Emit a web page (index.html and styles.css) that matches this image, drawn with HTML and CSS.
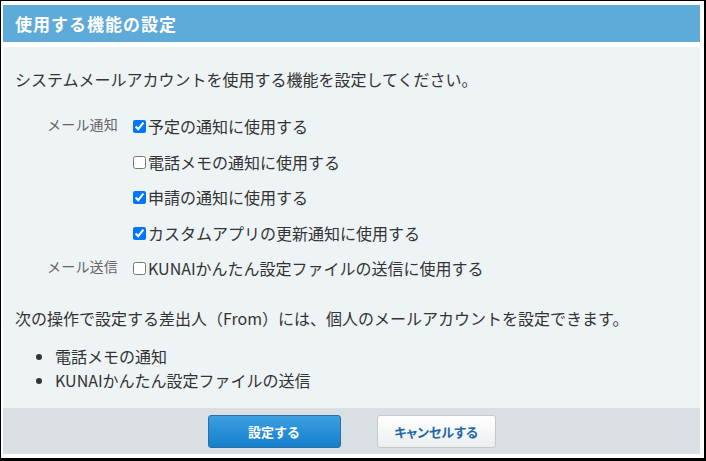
FILE: index.html
```html
<!DOCTYPE html>
<html lang="ja">
<head>
    <meta charset="UTF-8">
    <title>使用する機能の設定</title>
    <link rel="stylesheet" href="styles.css">
</head>
<body>
    <div class="dialog">
        <div class="dialog-title">使用する機能の設定</div>

        <div class="dialog-body">
            <p class="intro">システムメールアカウントを使用する機能を設定してください。</p>

            <div class="option-grid">
                <div class="option-label">メール通知</div>
                <label class="option"><input type="checkbox" checked>予定の通知に使用する</label>

                <div class="option-label"></div>
                <label class="option"><input type="checkbox">電話メモの通知に使用する</label>

                <div class="option-label"></div>
                <label class="option"><input type="checkbox" checked>申請の通知に使用する</label>

                <div class="option-label"></div>
                <label class="option"><input type="checkbox" checked>カスタムアプリの更新通知に使用する</label>

                <div class="option-label">メール送信</div>
                <label class="option"><input type="checkbox">KUNAIかんたん設定ファイルの送信に使用する</label>
            </div>

            <p class="note">次の操作で設定する差出人（From）には、個人のメールアカウントを設定できます。</p>
            <ul class="note-list">
                <li>電話メモの通知</li>
                <li>KUNAIかんたん設定ファイルの送信</li>
            </ul>
        </div>

        <div class="dialog-footer">
            <button type="button" class="btn btn-primary">設定する</button>
            <button type="button" class="btn btn-cancel">キャンセルする</button>
        </div>
    </div>
</body>
</html>
```

FILE: styles.css
```css
body {
    margin: 0;
    font-family: "Noto Sans CJK JP", "Noto Sans", sans-serif;
    color: #333;
    background-color: #ffffff;
}
.dialog {
    width: 706px;
    height: 461px;
    box-sizing: border-box;
    border-style: solid;
    border-color: #000;
    border-width: 1px 2px 3px 1px;
    padding: 4px 4px 4px 2px;
    background-color: #fff;
    display: flex;
    flex-direction: column;
}
.dialog-title {
    height: 37px;
    line-height: 37px;
    padding-left: 12px;
    background-color: #5eaad9;
    color: #fff;
    font-size: 17px;
    font-weight: bold;
    letter-spacing: 1px;
    margin-bottom: 5px;
}
.dialog-body {
    flex: 1;
    background-color: #eef3f6;
    padding: 20px 12px 0 12px;
    font-size: 16px;
}
.intro {
    margin: 0;
    line-height: 24px;
}

/* checkbox rows */
.option-grid {
    display: grid;
    grid-template-columns: 103px 1fr;
    column-gap: 15px;
    grid-auto-rows: 35.5px;
    margin-top: 18px;
}
.option-label {
    font-size: 14px;
    color: #666;
    text-align: right;
    line-height: 31px;
    letter-spacing: 0.2px;
}
.option {
    display: flex;
    align-items: center;
    line-height: 35px;
}
.option input {
    margin: 0 2px 0 0;
    width: 13px;
    height: 13px;
}

.note {
    margin: 19px 0 0 0;
    line-height: 24px;
}
.note-list {
    margin: 14px 0 0 0;
    padding-left: 40px;
    line-height: 24px;
}

.dialog-footer {
    height: 46px;
    background-color: #dadfe3;
    display: flex;
    justify-content: center;
    align-items: center;
    gap: 36px;
    padding-top: 1px;
    box-sizing: border-box;
}
.btn {
    height: 33px;
    border-radius: 3px;
    font-family: "Noto Sans CJK JP", sans-serif;
    font-size: 13px;
    font-weight: bold;
    cursor: pointer;
}
.btn-primary {
    width: 133px;
    color: #fff;
    border: 1px solid #2a6fa5;
    background: linear-gradient(#3c9fe0, #1580cc);
}
.btn-cancel {
    width: 119px;
    color: #1d69a5;
    border: 1px solid #c3c9cc;
    background: linear-gradient(#ffffff, #eceeef);
    font-feature-settings: "palt";
}
```
